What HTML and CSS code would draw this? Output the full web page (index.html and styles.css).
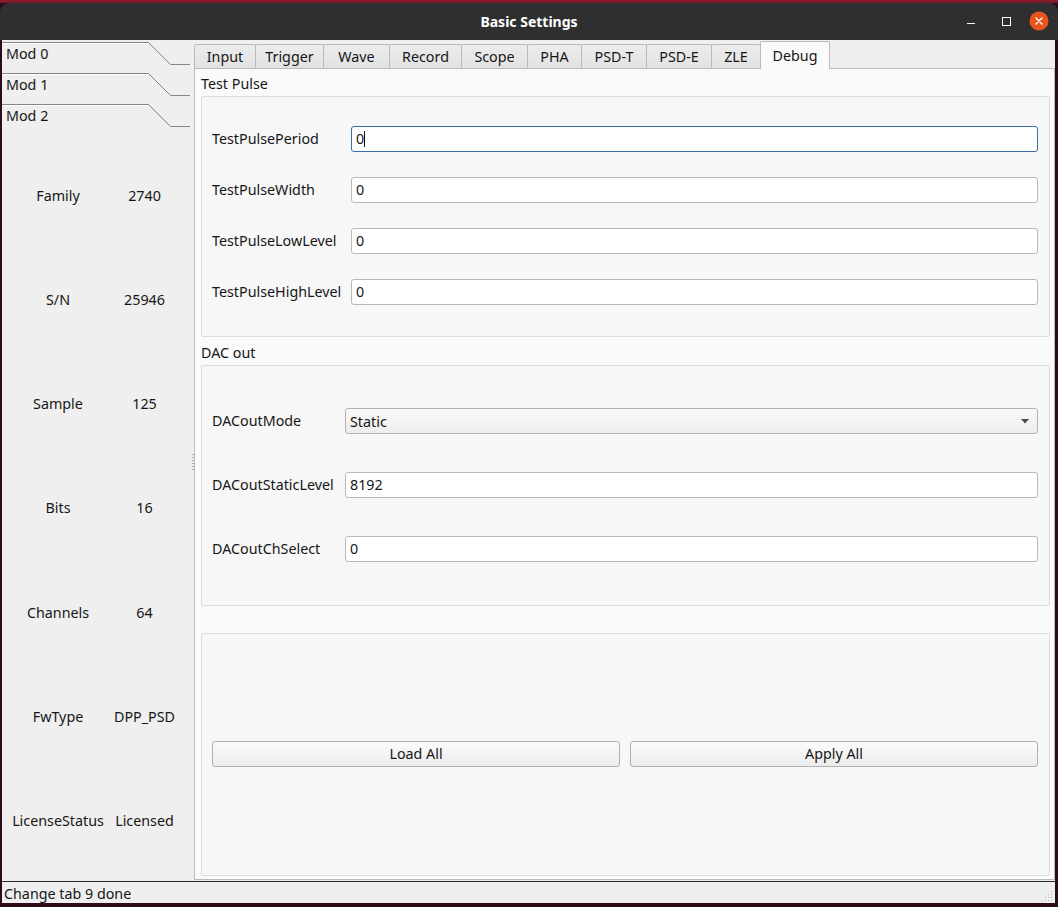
FILE: index.html
```html
<!DOCTYPE html>
<html>
<head>
<meta charset="utf-8">
<title>Basic Settings</title>
<link rel="stylesheet" href="styles.css">
</head>
<body>
<div class="desk">
  <div class="window">
    <div class="titlebar">
      <span></span>
      <span class="title">Basic Settings</span>
      <svg class="wctl" width="96" height="37" viewBox="0 0 96 37">
        <line x1="5" y1="20.5" x2="13" y2="20.5" stroke="#fff" stroke-width="1"/>
        <rect x="40.5" y="14.5" width="8" height="8" fill="none" stroke="#fff" stroke-width="1"/>
        <circle cx="77" cy="18" r="9.5" fill="#e9541f"/>
        <path d="M74 15 L80 21 M80 15 L74 21" stroke="#fff" stroke-width="1.4" stroke-linecap="round"/>
      </svg>
    </div>
    <div class="frame">
      <div class="main">
        <div class="left">
          <div class="tbhead"><span>Mod 0</span><svg class="tbline" width="190" height="31" viewBox="0 0 190 31"><polyline points="0,0.5 146.5,0.5 168.5,22.5 188,22.5" fill="none" stroke="#858585"/><line x1="0" y1="1.5" x2="146" y2="1.5" stroke="#fff"/></svg></div>
          <div class="tbhead"><span>Mod 1</span><svg class="tbline" width="190" height="31" viewBox="0 0 190 31"><polyline points="0,0.5 146.5,0.5 168.5,22.5 188,22.5" fill="none" stroke="#858585"/><line x1="0" y1="1.5" x2="146" y2="1.5" stroke="#fff"/></svg></div>
          <div class="tbhead"><span>Mod 2</span><svg class="tbline" width="190" height="31" viewBox="0 0 190 31"><polyline points="0,0.5 146.5,0.5 168.5,22.5 188,22.5" fill="none" stroke="#858585"/><line x1="0" y1="1.5" x2="146" y2="1.5" stroke="#fff"/></svg></div>
          <div class="info">
            <span>Family</span><span>2740</span>
            <span>S/N</span><span>25946</span>
            <span>Sample</span><span>125</span>
            <span>Bits</span><span>16</span>
            <span>Channels</span><span>64</span>
            <span>FwType</span><span>DPP_PSD</span>
            <span>LicenseStatus</span><span>Licensed</span>
          </div>
        </div>
        <div class="splitter"></div>
        <div class="tabwidget">
          <div class="tabbar">
            <div class="tab w-input">Input</div>
            <div class="tab w-trigger">Trigger</div>
            <div class="tab w-wave">Wave</div>
            <div class="tab w-record">Record</div>
            <div class="tab w-scope">Scope</div>
            <div class="tab w-pha">PHA</div>
            <div class="tab w-psdt">PSD-T</div>
            <div class="tab w-psde">PSD-E</div>
            <div class="tab w-zle">ZLE</div>
            <div class="tab w-debug sel">Debug</div>
          </div>
          <div class="pane">
            <div class="gtitle t27">Test Pulse</div>
            <div class="group g1">
              <div class="form f139 gap25">
                <span class="lbl">TestPulsePeriod</span><div class="edit focus">0<i class="caret"></i></div>
                <span class="lbl">TestPulseWidth</span><div class="edit">0</div>
                <span class="lbl">TestPulseLowLevel</span><div class="edit">0</div>
                <span class="lbl">TestPulseHighLevel</span><div class="edit">0</div>
              </div>
            </div>
            <div class="gtitle t28">DAC out</div>
            <div class="group g2">
              <div class="form f133 gap38">
                <span class="lbl">DACoutMode</span>
                <div class="combo"><span>Static</span><svg width="8" height="5" viewBox="0 0 8 5"><path d="M0 0 H8 L4 4.5 Z" fill="#4a4a4a"/></svg></div>
                <span class="lbl">DACoutStaticLevel</span><div class="edit">8192</div>
                <span class="lbl">DACoutChSelect</span><div class="edit">0</div>
              </div>
            </div>
            <div class="gtitle t27"></div>
            <div class="group g3">
              <div class="btnrow">
                <div class="btn">Load All</div>
                <div class="btn">Apply All</div>
              </div>
            </div>
          </div>
        </div>
      </div>
      <div class="status">
        <span>Change tab 9 done</span>
        <svg class="grip" width="12" height="12" viewBox="0 0 12 12">
          <g fill="#b5b5b5">
            <rect x="9" y="1" width="1" height="1"/>
            <rect x="6" y="4" width="1" height="1"/><rect x="9" y="4" width="1" height="1"/>
            <rect x="3" y="7" width="1" height="1"/><rect x="6" y="7" width="1" height="1"/><rect x="9" y="7" width="1" height="1"/>
            <rect x="0" y="10" width="1" height="1"/><rect x="3" y="10" width="1" height="1"/><rect x="6" y="10" width="1" height="1"/><rect x="9" y="10" width="1" height="1"/>
          </g>
        </svg>
      </div>
    </div>
  </div>
</div>
</body>
</html>
```
FILE: styles.css
```css
* { box-sizing: border-box; }
html, body { margin: 0; padding: 0; }
body {
  width: 1058px;
  height: 907px;
  overflow: hidden;
  font-family: "Noto Sans", "DejaVu Sans", sans-serif;
  font-size: 14.3px;
  color: #161616;
}
.desk {
  width: 1058px;
  height: 907px;
  background: linear-gradient(to bottom, #8a1d2e 0, #7a1828 3px, #2c0b1a 3px);
  padding-top: 3px;
}
.window {
  width: 1058px;
  height: 904px;
  display: flex;
  flex-direction: column;
}
.titlebar {
  height: 37px;
  background: #2f2f2f;
  border-radius: 9px 9px 0 0;
  display: grid;
  grid-template-columns: 1fr auto 1fr;
  align-items: center;
  color: #fff;
}
.title {
  font-weight: bold;
  font-size: 14px;
  line-height: 37px;
}
.wctl { justify-self: end; display: block; }
.frame {
  margin: 0 3px 0 2px;
  height: 863px;
  background: #efefef;
  display: flex;
  flex-direction: column;
}
.main {
  height: 841px;
  display: flex;
}
.left {
  width: 190px;
  padding-top: 2px;
  display: flex;
  flex-direction: column;
}
.tbhead {
  position: relative;
  height: 31px;
  padding-left: 4px;
  line-height: 24px;
}
.tbhead span { position: relative; z-index: 1; }
.tbline { position: absolute; left: 0; top: 0; }
.info {
  height: 730px;
  margin-top: 8px;
  display: grid;
  grid-template-columns: 112px 61px;
  grid-template-rows: repeat(7, 1fr);
  align-items: center;
  justify-items: center;
}
.info span { white-space: nowrap; }
.splitter {
  width: 2px;
  background: radial-gradient(circle, #a8a8a8 0.6px, transparent 0.8px) 0 50% / 2px 3px repeat-y;
  background-size: 2px 3px;
  -webkit-mask: linear-gradient(to bottom, transparent 0 412px, #000 412px 430px, transparent 430px);
  mask: linear-gradient(to bottom, transparent 0 412px, #000 412px 430px, transparent 430px);
}
.tabwidget {
  width: 861px;
  display: flex;
  flex-direction: column;
}
.tabbar {
  height: 28px;
  display: flex;
  align-items: flex-end;
}
.tab {
  height: 24px;
  margin-right: -1px;
  border: 1px solid #bababa;
  border-bottom: none;
  background: linear-gradient(to bottom, #ececec, #e2e2e2);
  text-align: center;
  line-height: 23px;
  border-radius: 2px 2px 0 0;
}
.tab.sel {
  height: 28px;
  margin-bottom: -1px;
  background: #fafafa;
  position: relative;
  z-index: 1;
  line-height: 27px;
}
.w-input { width: 62px; }
.w-trigger { width: 69px; }
.w-wave { width: 67px; }
.w-record { width: 73px; }
.w-scope { width: 67px; }
.w-pha { width: 55px; }
.w-psdt { width: 66px; }
.w-psde { width: 66px; }
.w-zle { width: 50px; }
.w-debug { width: 70px; }
.pane {
  height: 812px;
  border: 1px solid #bababa;
  background: #fafafa;
  padding: 0 4px 3px 6px;
}
.gtitle {
  display: flex;
  align-items: flex-end;
  padding-bottom: 3px;
  line-height: 18px;
}
.t27 { height: 27px; }
.t28 { height: 28px; }
.group {
  border: 1px solid #dcdcdc;
  border-radius: 2px;
  background: #f7f7f7;
  padding: 0 11px 0 10px;
}
.g1 { height: 241px; padding-top: 29px; }
.g2 { height: 241px; padding-top: 42px; }
.g3 { height: 243px; padding-top: 107px; }
.form {
  display: grid;
  align-items: center;
}
.f139 { grid-template-columns: 139px 1fr; }
.f133 { grid-template-columns: 133px 1fr; }
.gap25 { row-gap: 25px; }
.gap38 { row-gap: 38px; }
.lbl { white-space: nowrap; position: relative; top: -1px; }
.edit {
  height: 26px;
  background: #fff;
  border: 1px solid #b9b9b9;
  border-radius: 3px;
  padding-left: 4px;
  line-height: 24px;
  display: flex;
  align-items: center;
}
.edit.focus {
  border-color: #3a6ea5;
}
.caret {
  display: inline-block;
  width: 1px;
  height: 16px;
  background: #111;
}
.combo {
  height: 26px;
  border: 1px solid #b3b3b3;
  border-radius: 3px;
  background: linear-gradient(to bottom, #f9f9f9, #ededed);
  padding: 0 8px 0 4px;
  display: flex;
  align-items: center;
  justify-content: space-between;
}
.combo svg { display: block; }
.btnrow {
  display: grid;
  grid-template-columns: 1fr 1fr;
  column-gap: 10px;
}
.btn {
  height: 26px;
  border: 1px solid #b0b0b0;
  border-radius: 3px;
  background: linear-gradient(to bottom, #fbfbfb, #ececec);
  text-align: center;
  line-height: 23px;
}
.status {
  height: 22px;
  border-top: 1px solid #2a2a2a;
  padding-left: 2px;
  display: flex;
  align-items: center;
  justify-content: space-between;
  line-height: 22px;
}
.status span { position: relative; top: 1px; }
.grip { align-self: flex-end; margin: 0 1px 1px 0; }
```
